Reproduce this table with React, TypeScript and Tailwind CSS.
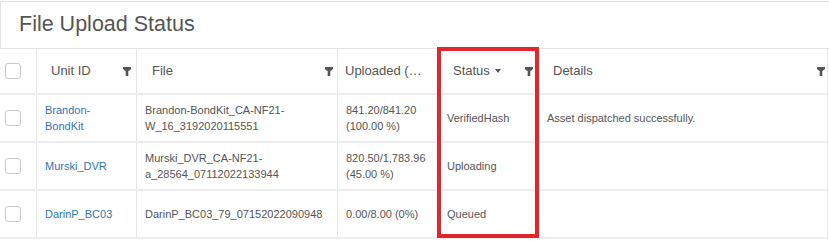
import React from "react";

type Row = {
  unit: string;
  file: string;
  uploaded: string;
  status: string;
  details: string;
};

const rows: Row[] = [
  {
    unit: "Brandon-BondKit",
    file: "Brandon-BondKit_CA-NF21-W_16_3192020115551",
    uploaded: "841.20/841.20 (100.00 %)",
    status: "VerifiedHash",
    details: "Asset dispatched successfully.",
  },
  {
    unit: "Murski_DVR",
    file: "Murski_DVR_CA-NF21-a_28564_07112022133944",
    uploaded: "820.50/1,783.96 (45.00 %)",
    status: "Uploading",
    details: "",
  },
  {
    unit: "DarinP_BC03",
    file: "DarinP_BC03_79_07152022090948",
    uploaded: "0.00/8.00 (0%)",
    status: "Queued",
    details: "",
  },
];

const cols = "grid grid-cols-[37px_100px_201px_102px_100px_288px]";

function FilterIcon() {
  return (
    <svg width="8" height="9" viewBox="0 0 8 9" className="shrink-0">
      <path d="M0 0H8V2L5.3 4.3V9H2.7V4.3L0 2Z" fill="#555" />
    </svg>
  );
}

function Checkbox() {
  return <span className="block h-4 w-4 rounded-[3px] border border-[#c9c9c9] bg-white" />;
}

export default function App() {
  return (
    <div className="relative h-[241px] w-[829px] overflow-hidden bg-white font-['Liberation_Sans',Arial,sans-serif] text-[#555]">
      <div className="mt-px flex h-[48px] items-center border-y border-l border-[#e3e3e3] pl-[18px]">
        <h1 className="text-[21.5px] leading-none text-[#555]">File Upload Status</h1>
      </div>

      <div className={`${cols} h-[46px] border-b-2 border-[#ececec] text-[13px]`}>
        <div className="flex items-center border-r border-[#e6e6e6] pl-[5px]">
          <Checkbox />
        </div>
        <div className="flex items-center justify-between border-r border-[#e6e6e6] pl-[14px] pr-[5px]">
          <span>Unit ID</span>
          <FilterIcon />
        </div>
        <div className="flex items-center justify-between border-r border-[#e6e6e6] pl-[15px] pr-[4px]">
          <span>File</span>
          <FilterIcon />
        </div>
        <div className="flex items-center border-r border-[#e6e6e6] pl-[7px] pr-[16px]">
          <span className="truncate">Uploaded (MB)</span>
        </div>
        <div className="flex items-center justify-between border-r border-[#e6e6e6] pl-[13px] pr-[6px]">
          <span className="flex items-center gap-[5px]">
            Status
            <svg width="6" height="4" viewBox="0 0 6 4">
              <path d="M0 0H6L3 4Z" fill="#555" />
            </svg>
          </span>
          <FilterIcon />
        </div>
        <div className="flex items-center justify-between border-r border-[#e6e6e6] pl-[13px] pr-[2px]">
          <span>Details</span>
          <FilterIcon />
        </div>
      </div>

      {rows.map((row) => (
        <div key={row.unit} className={`${cols} h-[48px] border-b-2 border-[#ededed] text-[11px] leading-[16px]`}>
          <div className="flex items-center border-r border-[#e6e6e6] pl-[5px]">
            <Checkbox />
          </div>
          <div className="flex items-center border-r border-[#e6e6e6] pl-[8px] pr-[14px]">
            <a className="text-[#2f75b6]">{row.unit}</a>
          </div>
          <div className="flex items-center border-r border-[#e6e6e6] pl-[8px] pr-[8px]">
            <span>{row.file}</span>
          </div>
          <div className="flex items-center border-r border-[#e6e6e6] pl-[8px] pr-[8px]">
            <span>{row.uploaded}</span>
          </div>
          <div className="flex items-center border-r border-[#e6e6e6] pl-[7px] pr-[6px]">
            <span>{row.status}</span>
          </div>
          <div className="flex items-center border-r border-[#e6e6e6] pl-[7px] pr-[6px]">
            <span>{row.details}</span>
          </div>
        </div>
      ))}

      {/* highlight around the status column */}
      <div className="pointer-events-none absolute left-[437px] top-[47px] h-[191px] w-[102px] border-4 border-[#e3262b]" />
    </div>
  );
}
